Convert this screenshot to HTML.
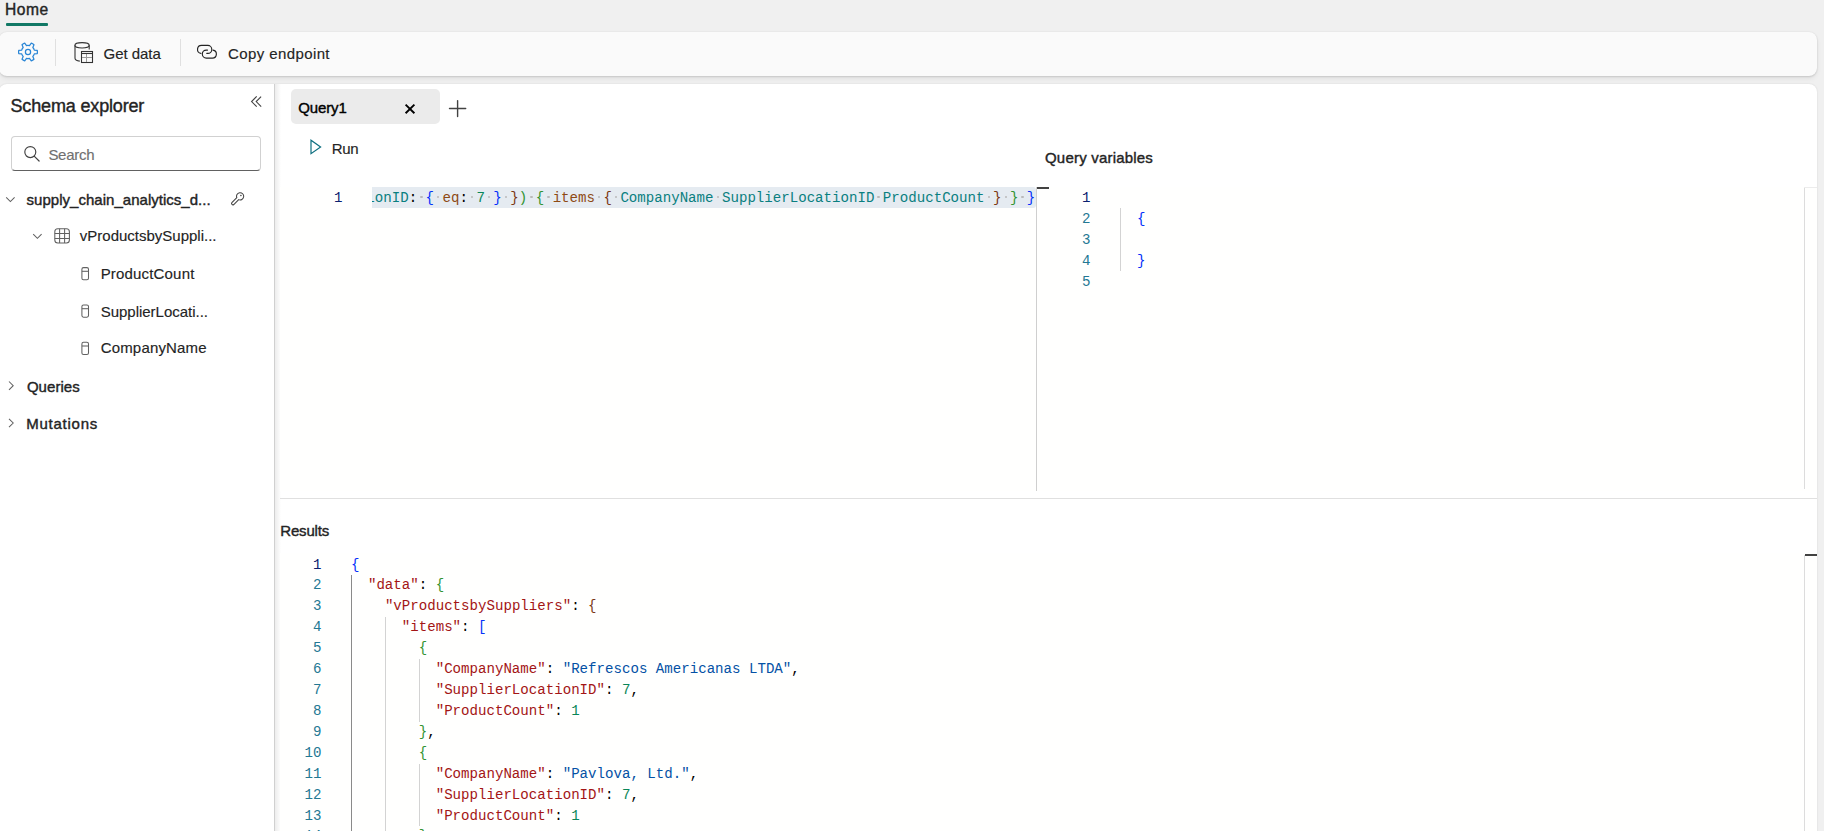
<!DOCTYPE html>
<html><head><meta charset="utf-8">
<style>
*{box-sizing:border-box;margin:0;padding:0}
html,body{width:1824px;height:831px;overflow:hidden;background:#f0f0f0;font-family:"Liberation Sans",sans-serif;color:#242424}
.a{position:absolute;white-space:nowrap}
.sb{-webkit-text-stroke:0.4px currentColor}
.rg{-webkit-text-stroke:0.15px currentColor}
.mono{font-family:"Liberation Mono",monospace;font-size:14.11px;line-height:21px;white-space:pre}
#toolbar{position:absolute;left:-1px;top:32px;width:1818px;height:44px;background:#fafafa;border-radius:8px;box-shadow:0 1px 2px rgba(0,0,0,0.10),0 0 2px rgba(0,0,0,0.08),0 3px 5px rgba(0,0,0,0.06)}
#panel{position:absolute;left:-1px;top:84px;width:1818px;height:800px;background:#fff;border-radius:8px;box-shadow:0 0 2px rgba(0,0,0,0.12)}
.sep{position:absolute;width:1px;background:#e0e0e0}
.ln{color:#237893}
.lna{color:#0b216f}
.k{color:#a31515}
.s{color:#0451a5}
.n{color:#098658}
.b1{color:#0431fa}
.b2{color:#319331}
.b3{color:#7b3814}
.p{color:#000}
.ws{color:transparent;position:relative}.ws::after{content:'';position:absolute;left:3.1px;top:5.9px;width:2.3px;height:2.3px;border-radius:50%;background:#bababa}
.f{color:#0a7f80}
.kw{color:#8e4a14}
svg.a{overflow:visible}
</style></head><body>
<div class="a sb" style="left:5.00px;top:0.00px;font-size:15.6px;line-height:20px;letter-spacing:0.567px;">Home</div>
<div class="a" style="left:6px;top:23px;width:42px;height:3px;background:#117865;border-radius:1px"></div>
<div id="toolbar"></div>
<svg class="a" style="left:0;top:0" width="60" height="80"><path d="M34.31 50.07L37.27 50.45A9.4 9.4 0 0 1 37.27 53.55L34.31 53.93A6.6 6.6 0 0 1 32.83 56.50L33.98 59.25A9.4 9.4 0 0 1 31.29 60.80L29.48 58.43A6.6 6.6 0 0 1 26.52 58.43L24.71 60.80A9.4 9.4 0 0 1 22.02 59.25L23.17 56.50A6.6 6.6 0 0 1 21.69 53.93L18.73 53.55A9.4 9.4 0 0 1 18.73 50.45L21.69 50.07A6.6 6.6 0 0 1 23.17 47.50L22.02 44.75A9.4 9.4 0 0 1 24.71 43.20L26.52 45.57A6.6 6.6 0 0 1 29.48 45.57L31.29 43.20A9.4 9.4 0 0 1 33.98 44.75L32.83 47.50A6.6 6.6 0 0 1 34.31 50.07Z" fill="none" stroke="#2a86d6" stroke-width="1.25" stroke-linejoin="round"/><circle cx="28" cy="52" r="2.6" fill="none" stroke="#2a86d6" stroke-width="1.25"/></svg>
<div class="sep" style="left:55px;top:39px;height:27px"></div>
<svg class="a" style="left:0;top:0" width="100" height="80"><g fill="none" stroke="#333" stroke-width="1.1">
<ellipse cx="82.05" cy="45.3" rx="7.15" ry="2.65"/>
<path d="M75 45.3V58.2C75 59.6 77 60.8 79.8 61.1"/>
<path d="M89.2 45.3V49.5"/>
<rect x="81.5" y="51.5" width="11" height="11"/>
<path d="M81.5 53.5H92.5"/>
</g><path d="M86.5 54V62M82 57.5H92" stroke="#9a9a9a" stroke-width="1" fill="none"/></svg>
<div class="a rg" style="left:103.60px;top:44.00px;font-size:15px;line-height:20px;letter-spacing:-0.043px;">Get data</div>
<div class="sep" style="left:180px;top:39px;height:27px"></div>
<svg class="a" style="left:192px;top:38px" width="30" height="28"><g fill="none" stroke="#242424" stroke-width="1.15" stroke-linecap="round">
<path d="M14.8 15.4H15.8A4 4 0 0 0 15.8 7.4H9.5A4 4 0 0 0 8.9 15.35"/>
<path d="M15.5 12.1H14.3A4 4 0 0 0 14.3 20.1H20.4A4 4 0 0 0 21.0 12.15"/>
</g></svg>
<div class="a rg" style="left:228.00px;top:44.00px;font-size:15px;line-height:20px;letter-spacing:0.4px;">Copy endpoint</div>
<div id="panel"></div>
<div class="a sb" style="left:10.50px;top:94.00px;font-size:18px;line-height:24px;letter-spacing:-0.157px;">Schema explorer</div>
<svg class="a" style="left:0;top:0" width="280" height="120"><path d="M256.7 96.4L251.6 101.6L256.7 106.7M261.1 96.6L256.2 101.6L261.2 106.7" fill="none" stroke="#424242" stroke-width="1.1"/></svg>
<div class="a" style="left:11px;top:136px;width:250px;height:35px;border:1px solid #d1d1d1;border-bottom-color:#616161;border-radius:4px;background:#fff"></div>
<svg class="a" style="left:0;top:0" width="60" height="180"><circle cx="30.3" cy="152.1" r="5.5" fill="none" stroke="#424242" stroke-width="1.15"/><path d="M34.4 156.3L39.1 161" stroke="#424242" stroke-width="1.2" stroke-linecap="round"/></svg>
<div class="a rg" style="left:48.40px;top:144.60px;font-size:15px;line-height:20px;letter-spacing:-0.28px;color:#707070;">Search</div>
<svg class="a" style="left:0;top:0" width="280" height="450"><g fill="none" stroke="#616161" stroke-width="1.05"><path d="M6.2 197.3L10.4 201.5L14.6 197.3"/><path d="M33.2 234.1L37.4 238.3L41.6 234.1"/><path d="M9 381.5L13.2 385.7L9 389.9"/><path d="M9 418.8L13.2 423L9 427.2"/><rect x="54.8" y="228.7" width="14.6" height="14.4" rx="3"/><path d="M59.6 228.7V243.1M64.6 228.7V243.1M54.8 233.4H69.4M54.8 238.5H69.4"/><rect x="81.9" y="267.6" width="6.6" height="12.2" rx="1.6"/><path d="M81.9 271.3H88.5"/><rect x="81.9" y="305.0" width="6.6" height="12.2" rx="1.6"/><path d="M81.9 308.7H88.5"/><rect x="81.9" y="342.3" width="6.6" height="12.2" rx="1.6"/><path d="M81.9 346.0H88.5"/></g><g fill="none" stroke="#424242" stroke-width="1.05"><path d="M236.79 197.71A3.6 3.6 0 1 1 238.69 199.61L233.77 204.53A1.35 1.35 0 0 1 231.87 202.63Z"/></g><circle cx="240.9" cy="195.5" r="0.8" fill="#424242"/></svg>
<div class="a sb" style="left:26.60px;top:189.70px;font-size:15px;line-height:20px;letter-spacing:0.023px;">supply_chain_analytics_d...</div>
<div class="a rg" style="left:79.80px;top:226.30px;font-size:15px;line-height:20px;letter-spacing:0.0px;">vProductsbySuppli...</div>
<div class="a rg" style="left:100.70px;top:264.30px;font-size:15px;line-height:20px;letter-spacing:0.173px;">ProductCount</div>
<div class="a rg" style="left:100.70px;top:301.80px;font-size:15px;line-height:20px;letter-spacing:-0.019px;">SupplierLocati...</div>
<div class="a rg" style="left:100.70px;top:338.40px;font-size:15px;line-height:20px;letter-spacing:0.17px;">CompanyName</div>
<div class="a sb" style="left:26.90px;top:376.80px;font-size:15px;line-height:20px;letter-spacing:0.05px;">Queries</div>
<div class="a sb" style="left:26.20px;top:413.60px;font-size:15px;line-height:20px;letter-spacing:0.762px;">Mutations</div>
<div class="a" style="left:274px;top:84px;width:1px;height:760px;background:#d0d0d0"></div>
<div class="a" style="left:275px;top:84px;width:6px;height:760px;background:linear-gradient(90deg,rgba(0,0,0,0.075),rgba(0,0,0,0))"></div>
<div class="a" style="left:291px;top:89px;width:149px;height:35px;background:#ebebeb;border-radius:5px"></div>
<div class="a sb" style="left:298.20px;top:98.20px;font-size:15px;line-height:20px;letter-spacing:-0.12px;color:#000;">Query1</div>
<svg class="a" style="left:0;top:0" width="480" height="170"><path d="M405.6 104.6L414.4 113.3M414.4 104.6L405.6 113.3" stroke="#000" stroke-width="1.9"/><path d="M457.6 100.6V116.6M449.5 108.5H465.7" stroke="#424242" stroke-width="1.4" stroke-linecap="round"/><path d="M311 140.2V153.7L320.6 146.9Z" fill="none" stroke="#0e6f80" stroke-width="1.2" stroke-linejoin="miter"/></svg>
<div class="a rg" style="left:331.70px;top:138.50px;font-size:15px;line-height:20px;letter-spacing:-0.35px;">Run</div>
<div class="a sb" style="left:1045.00px;top:147.90px;font-size:15px;line-height:20px;letter-spacing:0.2px;">Query variables</div>
<div class="a" style="left:280px;top:187px;width:757px;height:304px;background:#fffffe"></div>
<div class="a" style="left:1037px;top:187px;width:780px;height:304px;background:#fffffe"></div>
<div class="a" style="left:1036px;top:187px;width:1px;height:304px;background:#cfcfcf"></div>
<div class="a" style="left:1037px;top:187px;width:12px;height:2px;background:#424242"></div>
<div class="a" style="left:1804px;top:187px;width:1px;height:302px;background:#dcdcdc"></div>
<div class="a" style="left:1804px;top:187px;width:13px;height:1px;background:#ececec"></div>
<div class="a" style="left:372px;top:187px;width:663.5px;height:21px;background:#e5ebf1;border-radius:0 3px 3px 0"></div>
<div class="a mono" style="left:334.00px;top:188.00px"><span class="lna">1</span></div>
<div class="a" style="left:372px;top:187px;width:670px;height:22px;overflow:hidden"><div class="a mono" style="left:-5.70px;top:1.00px"><span class="f">ionID</span><span class="p">:</span><span class="ws">·</span><span class="b1">{</span><span class="ws">·</span><span class="kw">eq</span><span class="p">:</span><span class="ws">·</span><span class="n">7</span><span class="ws">·</span><span class="b1">}</span><span class="ws">·</span><span class="b3">}</span><span class="b2">)</span><span class="ws">·</span><span class="b2">{</span><span class="ws">·</span><span class="kw">items</span><span class="ws">·</span><span class="b3">{</span><span class="ws">·</span><span class="f">CompanyName</span><span class="ws">·</span><span class="f">SupplierLocationID</span><span class="ws">·</span><span class="f">ProductCount</span><span class="ws">·</span><span class="b3">}</span><span class="ws">·</span><span class="b2">}</span><span class="ws">·</span><span class="b1">}</span></div>
</div>
<div class="a mono" style="left:1082.00px;top:188.00px"><span class="lna">1</span></div>
<div class="a mono" style="left:1082.00px;top:208.92px"><span class="ln">2</span></div>
<div class="a mono" style="left:1082.00px;top:229.84px"><span class="ln">3</span></div>
<div class="a mono" style="left:1082.00px;top:250.76px"><span class="ln">4</span></div>
<div class="a mono" style="left:1082.00px;top:271.68px"><span class="ln">5</span></div>
<div class="a mono" style="left:1137.00px;top:208.92px"><span class="b1">{</span></div>
<div class="a mono" style="left:1137.00px;top:250.76px"><span class="b1">}</span></div>
<div class="a" style="left:1120px;top:208px;width:1px;height:63px;background:#d3d3d3"></div>
<div class="a" style="left:280px;top:498px;width:1537px;height:1px;background:#e0e0e0"></div>
<div class="a sb" style="left:280.30px;top:520.80px;font-size:15px;line-height:20px;letter-spacing:-0.183px;">Results</div>
<div class="a" style="left:280px;top:553px;width:1537px;height:300px;background:#fffffe"></div>
<div class="a" style="left:1804px;top:555px;width:1px;height:300px;background:#dcdcdc"></div>
<div class="a" style="left:1805px;top:554px;width:12px;height:2px;background:#424242"></div>
<div class="a mono" style="left:313.03px;top:554.50px"><span class="lna">1</span></div>
<div class="a mono" style="left:351.00px;top:554.50px"><span class="b1">{</span></div>
<div class="a mono" style="left:313.03px;top:575.42px"><span class="ln">2</span></div>
<div class="a mono" style="left:351.00px;top:575.42px">  <span class="k">"data"</span><span class="p">: </span><span class="b2">{</span></div>
<div class="a mono" style="left:313.03px;top:596.34px"><span class="ln">3</span></div>
<div class="a mono" style="left:351.00px;top:596.34px">    <span class="k">"vProductsbySuppliers"</span><span class="p">: </span><span class="b3">{</span></div>
<div class="a mono" style="left:313.03px;top:617.26px"><span class="ln">4</span></div>
<div class="a mono" style="left:351.00px;top:617.26px">      <span class="k">"items"</span><span class="p">: </span><span class="b1">[</span></div>
<div class="a mono" style="left:313.03px;top:638.18px"><span class="ln">5</span></div>
<div class="a mono" style="left:351.00px;top:638.18px">        <span class="b2">{</span></div>
<div class="a mono" style="left:313.03px;top:659.10px"><span class="ln">6</span></div>
<div class="a mono" style="left:351.00px;top:659.10px">          <span class="k">"CompanyName"</span><span class="p">: </span><span class="s">"Refrescos Americanas LTDA"</span><span class="p">,</span></div>
<div class="a mono" style="left:313.03px;top:680.02px"><span class="ln">7</span></div>
<div class="a mono" style="left:351.00px;top:680.02px">          <span class="k">"SupplierLocationID"</span><span class="p">: </span><span class="n">7</span><span class="p">,</span></div>
<div class="a mono" style="left:313.03px;top:700.94px"><span class="ln">8</span></div>
<div class="a mono" style="left:351.00px;top:700.94px">          <span class="k">"ProductCount"</span><span class="p">: </span><span class="n">1</span></div>
<div class="a mono" style="left:313.03px;top:721.86px"><span class="ln">9</span></div>
<div class="a mono" style="left:351.00px;top:721.86px">        <span class="b2">}</span><span class="p">,</span></div>
<div class="a mono" style="left:304.57px;top:742.78px"><span class="ln">10</span></div>
<div class="a mono" style="left:351.00px;top:742.78px">        <span class="b2">{</span></div>
<div class="a mono" style="left:304.57px;top:763.70px"><span class="ln">11</span></div>
<div class="a mono" style="left:351.00px;top:763.70px">          <span class="k">"CompanyName"</span><span class="p">: </span><span class="s">"Pavlova, Ltd."</span><span class="p">,</span></div>
<div class="a mono" style="left:304.57px;top:784.62px"><span class="ln">12</span></div>
<div class="a mono" style="left:351.00px;top:784.62px">          <span class="k">"SupplierLocationID"</span><span class="p">: </span><span class="n">7</span><span class="p">,</span></div>
<div class="a mono" style="left:304.57px;top:805.54px"><span class="ln">13</span></div>
<div class="a mono" style="left:351.00px;top:805.54px">          <span class="k">"ProductCount"</span><span class="p">: </span><span class="n">1</span></div>
<div class="a mono" style="left:304.57px;top:826.46px"><span class="ln">14</span></div>
<div class="a mono" style="left:351.00px;top:826.46px">        <span class="b2">}</span><span class="p">,</span></div>
<div class="a" style="left:351px;top:575.4px;width:1px;height:400px;background:#8a8a8a"></div>
<div class="a" style="left:385px;top:617.3px;width:1px;height:400px;background:#d3d3d3"></div>
<div class="a" style="left:419px;top:659.1px;width:1px;height:62.8px;background:#d3d3d3"></div>
<div class="a" style="left:419px;top:763.7px;width:1px;height:62.8px;background:#d3d3d3"></div>
</body></html>
